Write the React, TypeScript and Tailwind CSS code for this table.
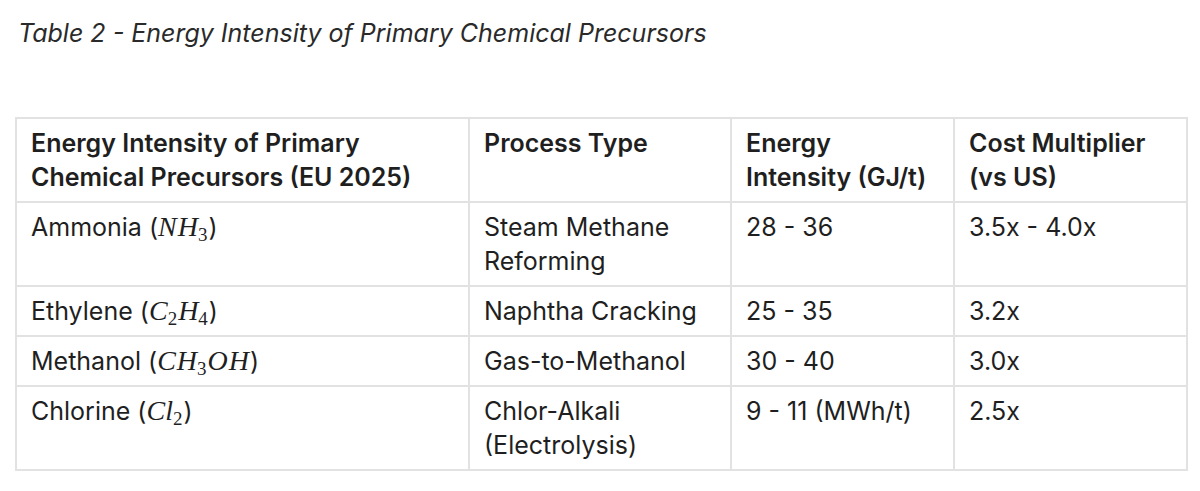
const ROWS = [
  { name: "Ammonia", chem: [["N"], ["H", "3"]], process: ["Steam Methane", "Reforming"], energy: "28 - 36", cost: "3.5x - 4.0x" },
  { name: "Ethylene", chem: [["C", "2"], ["H", "4"]], process: ["Naphtha Cracking"], energy: "25 - 35", cost: "3.2x" },
  { name: "Methanol", chem: [["C"], ["H", "3"], ["O"], ["H"]], process: ["Gas-to-Methanol"], energy: "30 - 40", cost: "3.0x" },
  { name: "Chlorine", chem: [["Cl", "2"]], process: ["Chlor-Alkali", "(Electrolysis)"], energy: "9 - 11 (MWh/t)", cost: "2.5x" },
];

function Formula({ parts }: { parts: string[][] }) {
  return (
    <span>
      (
      <span className="font-['Liberation_Serif',serif] italic text-[28px] leading-none">
        {parts.map(([sym, sub], i) => (
          <span key={i} className="mr-[1px]">
            {sym}
            {sub && <span className="not-italic text-[19px] leading-none relative top-[5px]">{sub}</span>}
          </span>
        ))}
      </span>
      )
    </span>
  );
}

export default function App() {
  const cell = "border-2 border-[#e2e2e2] px-[14px] py-[7px] align-top text-left";
  return (
    <div className="w-[1200px] h-[491px] bg-white text-[#1f1f1f] font-['Inter',sans-serif]">
      <p className="pl-[18px] pt-[16px] italic text-[25px] leading-[34px] text-[#2a2a2a]">
        Table 2 - Energy Intensity of Primary Chemical Precursors
      </p>
      <table className="mt-[67px] ml-[15px] border-collapse text-[25px] leading-[34px]">
        <thead>
          <tr>
            <th className={`${cell} w-[453px] font-semibold`}>
              Energy Intensity of Primary
              <br />
              Chemical Precursors (EU 2025)
            </th>
            <th className={`${cell} w-[262px] font-semibold`}>Process Type</th>
            <th className={`${cell} w-[223px] font-semibold`}>
              Energy
              <br />
              Intensity (GJ/t)
            </th>
            <th className={`${cell} w-[233px] font-semibold`}>
              Cost Multiplier
              <br />
              (vs US)
            </th>
          </tr>
        </thead>
        <tbody>
          {ROWS.map((r) => (
            <tr key={r.name}>
              <td className={cell}>
                {r.name} <Formula parts={r.chem} />
              </td>
              <td className={cell}>
                {r.process.map((p, i) => (
                  <div key={i}>{p}</div>
                ))}
              </td>
              <td className={cell}>{r.energy}</td>
              <td className={cell}>{r.cost}</td>
            </tr>
          ))}
        </tbody>
      </table>
    </div>
  );
}
